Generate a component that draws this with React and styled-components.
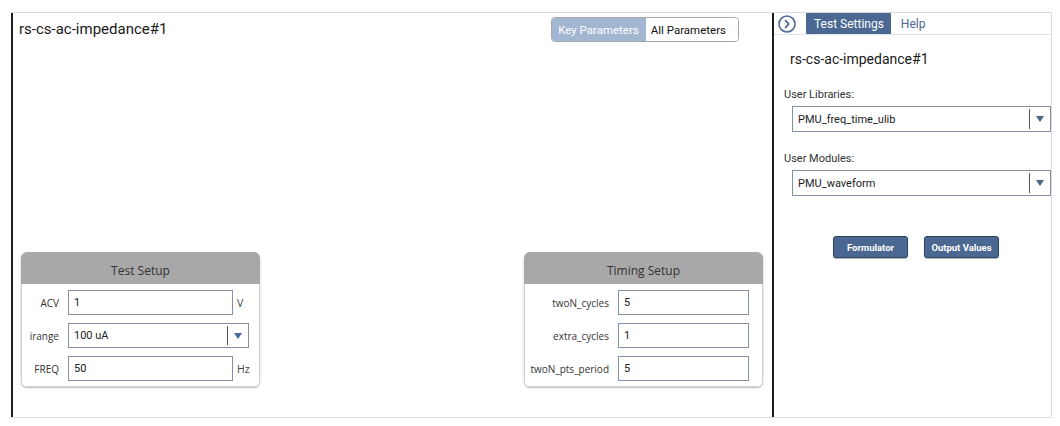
import React from "react";
import styled, { createGlobalStyle } from "styled-components";

const Global = createGlobalStyle`
  html, body { margin: 0; padding: 0; background: #fff; }
  body { font-family: Roboto, "Liberation Sans", sans-serif; color: #222; }
  * { box-sizing: border-box; }
`;

const Page = styled.div`
  padding: 12px 0 0 11px;
`;

const Frame = styled.div`
  width: 1041px;
  height: 406px;
  display: flex;
  border-top: 1px solid #dcdcdc;
  border-right: 1px solid #dcdcdc;
  border-bottom: 1px solid #dcdcdc;
`;

const LeftPanel = styled.div`
  width: 763px;
  flex: none;
  display: flex;
  flex-direction: column;
  border-left: 2px solid #1e1e1e;
  border-right: 2px solid #1e1e1e;
`;

const HeaderRow = styled.div`
  display: flex;
  justify-content: space-between;
  align-items: flex-start;
  padding: 4px 33px 0 6px;
`;

const Title = styled.div`
  font-size: 15px;
  line-height: 24px;
  color: #1a1a1a;
`;

const Toggle = styled.div`
  display: flex;
  height: 25px;
  border: 1px solid #a9a9a9;
  border-radius: 4px;
  overflow: hidden;
  box-shadow: 0 0 1px rgba(0,0,0,0.15);
`;

const ToggleBtn = styled.div`
  display: flex;
  align-items: center;
  padding: 0 ${p => (p.$active ? "7px" : "12px")} 0 ${p => (p.$active ? "6px" : "5px")};
  font-size: 11.5px;
  background: ${p => (p.$active ? "#a2b6d2" : "#fff")};
  color: ${p => (p.$active ? "#fff" : "#111")};
`;

const CardsRow = styled.div`
  margin-top: auto;
  display: flex;
  justify-content: space-between;
  padding: 0 9px 30px 8px;
`;

const Card = styled.div`
  width: 239px;
  height: 135px;
  display: flex;
  flex-direction: column;
  border-radius: 6px;
  box-shadow: 0 1px 2px rgba(0,0,0,0.25);
`;

const CardHeader = styled.div`
  height: 32px;
  background: #a8a8a8;
  border-radius: 6px 6px 0 0;
  display: flex;
  align-items: center;
  justify-content: center;
  padding-top: 5px;
  font-family: "Open Sans", "Noto Sans", sans-serif;
  font-size: 12px;
  color: #333;
`;

const CardBody = styled.div`
  flex: 1;
  border: 1px solid #cfcfcf;
  border-top: none;
  border-radius: 0 0 5px 5px;
  padding: 6px 0 0 0;
  display: flex;
  flex-direction: column;
  gap: 8px;
`;

const Row = styled.div`
  display: flex;
  align-items: center;
  height: 25px;
`;

const Label = styled.div`
  width: ${p => p.$w}px;
  flex: none;
  text-align: right;
  padding-right: 9px;
  font-family: "Open Sans", "Noto Sans", sans-serif;
  font-size: 10px;
  color: #333;
`;

const Input = styled.div`
  width: ${p => p.$w}px;
  height: 25px;
  border: 1px solid #8390a8;
  display: flex;
  align-items: center;
  padding-left: 5px;
  font-size: 11px;
  color: #222;
  background: #fff;
`;

const Unit = styled.div`
  padding-left: 4px;
  font-family: "Open Sans", "Noto Sans", sans-serif;
  font-size: 10.5px;
  color: #444;
`;

const Select = styled.div`
  width: ${p => (p.$w ? `${p.$w}px` : "auto")};
  flex: ${p => (p.$w ? "none" : "1")};
  height: ${p => p.$h || 25}px;
  border: 1px solid #8390a8;
  display: flex;
  align-items: center;
  background: #fff;
  font-size: 11px;
  color: #222;
`;

const SelectText = styled.div`
  flex: 1;
  padding-left: 5px;
`;

const SelectDivider = styled.div`
  width: 1px;
  align-self: stretch;
  margin: 2px 0;
  background: #555;
`;

const Arrow = styled.div`
  width: 20px;
  display: flex;
  justify-content: center;
  &::after {
    content: "";
    border-left: 4.5px solid transparent;
    border-right: 4.5px solid transparent;
    border-top: 6px solid #4a6891;
  }
`;

const RightPanel = styled.div`
  flex: 1;
  display: flex;
  flex-direction: column;
`;

const TabBar = styled.div`
  height: 22px;
  display: flex;
  align-items: stretch;
  border-bottom: 1px solid #e2e2e2;
  padding-left: 4px;
`;

const IconWrap = styled.div`
  display: flex;
  align-items: center;
  margin-right: 10px;
`;

const Tab = styled.div`
  display: flex;
  align-items: center;
  padding: 0 7px 0 ${p => (p.$active ? "8px" : "10px")};
  font-size: 12px;
  background: ${p => (p.$active ? "#4a6891" : "transparent")};
  color: ${p => (p.$active ? "#fff" : "#4a6891")};
`;

const RightBody = styled.div`
  padding: 0 0 0 10px;
  display: flex;
  flex-direction: column;
`;

const RightTitle = styled.div`
  font-size: 14px;
  margin: 14px 0 0 6px;
  line-height: 20px;
  color: #1a1a1a;
`;

const FieldLabel = styled.div`
  font-size: 11px;
  color: #333;
  margin-top: ${p => p.$mt}px;
  line-height: 14px;
`;

const FieldSelect = styled.div`
  margin: 4px 0 0 8px;
  display: flex;
`;

const Buttons = styled.div`
  display: flex;
  gap: 16px;
  padding-left: 49px;
  margin-top: 40px;
`;

const Button = styled.div`
  width: 75px;
  height: 22px;
  display: flex;
  align-items: center;
  justify-content: center;
  background: #4a6891;
  border: 1px solid #2e4564;
  border-radius: 3px;
  color: #fff;
  font-size: 9.5px;
  font-weight: bold;
  box-shadow: 0 1px 1px rgba(0,0,0,0.3);
`;

const ChevronCircle = () => (
  <svg width="18" height="18" viewBox="0 0 18 18">
    <circle cx="9" cy="9" r="8" fill="none" stroke="#4a6891" strokeWidth="1.6" />
    <path d="M7.6 5.6 L10.8 9 L7.6 12.4" fill="none" stroke="#4a6891" strokeWidth="1.8" strokeLinecap="round" strokeLinejoin="round" />
  </svg>
);

const DropDown = ({ value, w, h }) => (
  <Select $w={w} $h={h}>
    <SelectText>{value}</SelectText>
    <SelectDivider />
    <Arrow />
  </Select>
);

export default function App() {
  return (
    <Page>
      <Global />
      <Frame>
        <LeftPanel>
          <HeaderRow>
            <Title>rs-cs-ac-impedance#1</Title>
            <Toggle>
              <ToggleBtn $active>Key Parameters</ToggleBtn>
              <ToggleBtn>All Parameters</ToggleBtn>
            </Toggle>
          </HeaderRow>
          <CardsRow>
            <Card>
              <CardHeader>Test Setup</CardHeader>
              <CardBody>
                <Row>
                  <Label $w={46}>ACV</Label>
                  <Input $w={165}>1</Input>
                  <Unit>V</Unit>
                </Row>
                <Row>
                  <Label $w={46}>irange</Label>
                  <DropDown value="100 uA" w={181} />
                </Row>
                <Row>
                  <Label $w={46}>FREQ</Label>
                  <Input $w={165}>50</Input>
                  <Unit>Hz</Unit>
                </Row>
              </CardBody>
            </Card>
            <Card>
              <CardHeader>Timing Setup</CardHeader>
              <CardBody>
                <Row>
                  <Label $w={93}>twoN_cycles</Label>
                  <Input $w={131}>5</Input>
                </Row>
                <Row>
                  <Label $w={93}>extra_cycles</Label>
                  <Input $w={131}>1</Input>
                </Row>
                <Row>
                  <Label $w={93}>twoN_pts_period</Label>
                  <Input $w={131}>5</Input>
                </Row>
              </CardBody>
            </Card>
          </CardsRow>
        </LeftPanel>
        <RightPanel>
          <TabBar>
            <IconWrap><ChevronCircle /></IconWrap>
            <Tab $active>Test Settings</Tab>
            <Tab>Help</Tab>
          </TabBar>
          <RightBody>
            <RightTitle>rs-cs-ac-impedance#1</RightTitle>
            <FieldLabel $mt={19}>User Libraries:</FieldLabel>
            <FieldSelect><DropDown value="PMU_freq_time_ulib" h={26} /></FieldSelect>
            <FieldLabel $mt={20}>User Modules:</FieldLabel>
            <FieldSelect><DropDown value="PMU_waveform" h={26} /></FieldSelect>
            <Buttons>
              <Button>Formulator</Button>
              <Button>Output Values</Button>
            </Buttons>
          </RightBody>
        </RightPanel>
      </Frame>
    </Page>
  );
}
